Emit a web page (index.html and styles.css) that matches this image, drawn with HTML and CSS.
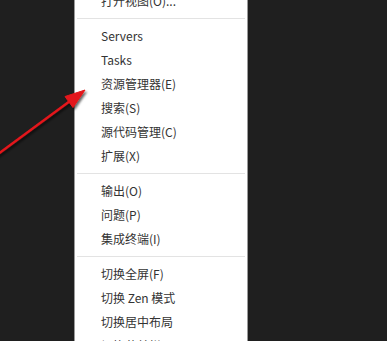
FILE: index.html
```html
<!DOCTYPE html>
<html lang="zh-CN">
<head>
    <meta charset="UTF-8">
    <meta name="viewport" content="width=device-width, initial-scale=1.0">
    <title>视图菜单</title>
    <link rel="stylesheet" href="styles.css">
</head>
<body>
    <div class="menu">
        <div class="menu-item">打开视图(O)...</div>
        <div class="separator"></div>
        <div class="menu-item">Servers</div>
        <div class="menu-item">Tasks</div>
        <div class="menu-item">资源管理器(E)</div>
        <div class="menu-item">搜索(S)</div>
        <div class="menu-item">源代码管理(C)</div>
        <div class="menu-item">扩展(X)</div>
        <div class="separator"></div>
        <div class="menu-item">输出(O)</div>
        <div class="menu-item">问题(P)</div>
        <div class="menu-item">集成终端(I)</div>
        <div class="separator"></div>
        <div class="menu-item">切换全屏(F)</div>
        <div class="menu-item">切换 Zen 模式</div>
        <div class="menu-item">切换居中布局</div>
        <div class="menu-item">切换菜单栏(B)</div>
    </div>

    <!-- red annotation arrow -->
    <svg class="arrow" width="120" height="170" viewBox="0 0 120 170">
        <defs>
            <filter id="shadow" x="-20%" y="-20%" width="140%" height="140%">
                <feDropShadow dx="1.5" dy="2" stdDeviation="1.2" flood-color="#000" flood-opacity="0.6"/>
            </filter>
        </defs>
        <g filter="url(#shadow)" fill="#e3151a" stroke="#e3151a">
            <line x1="-10" y1="160" x2="70" y2="101" stroke-width="2.5"/>
            <polygon points="85,90 73,107.5 65,96.5" stroke-width="1" stroke-linejoin="round"/>
        </g>
    </svg>
</body>
</html>
```

FILE: styles.css
```css
body {
    margin: 0;
    background-color: #1f1f1f;
    font-family: "Noto Sans CJK SC", "Noto Sans", sans-serif;
    overflow: hidden;
    height: 341px;
}

.menu {
    width: 172px;
    margin: -15px 0 0 74px;
    padding: 4px 0;
    background: #fff;
    border-left: 1px solid #9a9a9a;
    border-right: 1px solid #9a9a9a;
}

.menu-item {
    height: 24px;
    line-height: 24px;
    padding-left: 26px;
    font-size: 12px;
    color: #333;
    white-space: nowrap;
}

.separator {
    height: 1px;
    margin: 5px 2px;
    background: #e3e3e3;
}

.arrow {
    position: absolute;
    left: 0;
    top: 0;
}
```
